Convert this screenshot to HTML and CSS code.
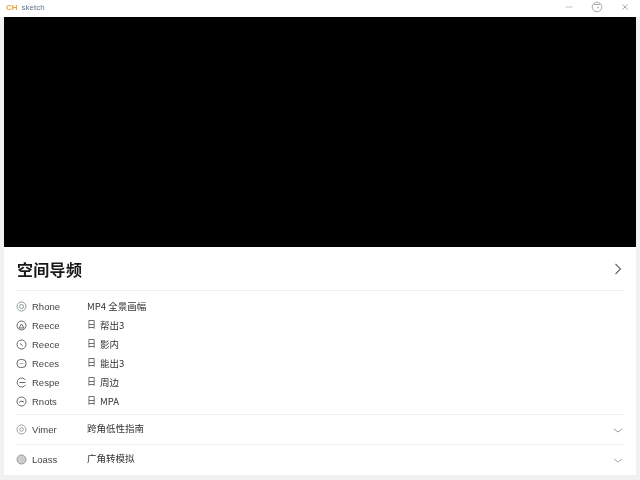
FILE: index.html
```html
<!DOCTYPE html>
<html lang="zh">
<head>
<meta charset="utf-8">
<title>空间导频</title>
<link rel="stylesheet" href="styles.css">
</head>
<body>
<div class="window">
  <header class="titlebar">
    <div class="brand">
      <span class="logo">CH</span>
      <span class="appname">sketch</span>
    </div>
    <div class="controls">
      <svg class="ctl" width="12" height="12" viewBox="0 0 12 12"><path d="M2.500 6h7" stroke="#c4c4c4" fill="none"/></svg>
      <svg class="ctl" width="12" height="12" viewBox="0 0 12 12"><circle cx="6" cy="6" r="4.800" stroke="#a8a8a8" fill="none"/><path d="M3 3.500h6M6 6l2 1" stroke="#a8a8a8" fill="none"/></svg>
      <svg class="ctl" width="12" height="12" viewBox="0 0 12 12"><path d="M3.500 3.500l5 5M8.500 3.500l-5 5" stroke="#b0a8a4" fill="none"/></svg>
    </div>
  </header>
  <div class="video"></div>
  <main class="panel">
    <section class="heading">
      <h1>空间导频</h1>
      <svg width="10" height="14" viewBox="0 0 10 14"><path d="M2.500 2l5 5-5 5" stroke="#666" stroke-width="1.100" fill="none"/></svg>
    </section>
    <section class="specs">
      <div class="row">
        <svg class="ico" width="11" height="11" viewBox="0 0 11 11"><circle cx="5.500" cy="5.500" r="4.500" stroke="#8a9a94" fill="none"/><circle cx="5.500" cy="5.500" r="2" stroke="#8a9a94" fill="none"/></svg>
        <span class="label">Rhone</span><span class="value">MP4 全景画幅</span>
      </div>
      <div class="row">
        <svg class="ico" width="11" height="11" viewBox="0 0 11 11"><circle cx="5.500" cy="5.500" r="4.500" stroke="#666" fill="none"/><path d="M3 8l2.500-4L8 8z" stroke="#666" fill="none"/></svg>
        <span class="label">Reece</span><span class="value"><span class="box">日</span>帮出3</span>
      </div>
      <div class="row">
        <svg class="ico" width="11" height="11" viewBox="0 0 11 11"><circle cx="5.500" cy="5.500" r="4.500" stroke="#666" fill="none"/><path d="M4 4.500l2.500 2" stroke="#666" fill="none"/></svg>
        <span class="label">Reece</span><span class="value"><span class="box">日</span>影内</span>
      </div>
      <div class="row">
        <svg class="ico" width="11" height="11" viewBox="0 0 11 11"><rect x="1" y="1.500" width="9" height="8" rx="3.500" stroke="#666" fill="none"/><path d="M3.500 5.500h4" stroke="#aaa" fill="none"/></svg>
        <span class="label">Reces</span><span class="value"><span class="box">日</span>能出3</span>
      </div>
      <div class="row">
        <svg class="ico" width="11" height="11" viewBox="0 0 11 11"><path d="M9.500 3.200A4.500 4.500 0 1 0 9.500 7.800" stroke="#666" fill="none"/><path d="M3.500 5.500h6" stroke="#666" fill="none"/></svg>
        <span class="label">Respe</span><span class="value"><span class="box">日</span>周边</span>
      </div>
      <div class="row">
        <svg class="ico" width="11" height="11" viewBox="0 0 11 11"><circle cx="5.500" cy="5.500" r="4.500" stroke="#666" fill="none"/><path d="M3 6.500l2-1.500 3 1" stroke="#666" fill="none"/></svg>
        <span class="label">Rnots</span><span class="value"><span class="box">日</span>MPA</span>
      </div>
    </section>
    <section class="fold">
      <svg class="ico" width="11" height="11" viewBox="0 0 11 11"><circle cx="5.500" cy="5.500" r="4.500" stroke="#999" fill="none"/><circle cx="5.500" cy="5.500" r="1.800" stroke="#999" fill="none"/></svg>
      <span class="label">Vimer</span><span class="value">跨角低性指南</span>
      <svg class="chev" width="10" height="8" viewBox="0 0 10 8"><path d="M1 2l4 3 4-3" stroke="#999" fill="none"/></svg>
    </section>
    <section class="fold">
      <svg class="ico" width="11" height="11" viewBox="0 0 11 11"><circle cx="5.500" cy="5.500" r="4.500" stroke="#999" fill="#ccc"/></svg>
      <span class="label">Loass</span><span class="value">广角转模拟</span>
      <svg class="chev" width="10" height="8" viewBox="0 0 10 8"><path d="M1 2l4 3 4-3" stroke="#aaa" fill="none"/></svg>
    </section>
  </main>
</div>
</body>
</html>
```
FILE: styles.css
```css
* { box-sizing: border-box; }
html, body { margin: 0; height: 100%; }
body { background: #f1f1f1; font-family: "Liberation Sans", "Noto Sans CJK SC", sans-serif; color: #333; }
.window { width: 640px; height: 480px; display: flex; flex-direction: column; padding: 0 4px 5px; overflow: hidden; }
.titlebar { height: 17px; margin: 0 -4px; padding: 0 0 0 6px; background: #fff; display: flex; align-items: center; justify-content: space-between; flex: none; }
.brand { display: flex; gap: 4px; align-items: center; font-size: 8px; margin-top: -3px; filter: blur(0.4px); }
.logo { color: #e8a93a; font-weight: 700; }
.appname { color: #64748b; }
.controls { display: flex; gap: 16px; padding-right: 9px; margin-top: -4px; align-items: center; filter: blur(0.4px); }
.video { height: 230px; background: #000; flex: none; }
.panel { flex: 1; background: #fff; padding: 0 12px; display: flex; flex-direction: column; }
.heading { height: 44px; display: flex; align-items: center; justify-content: space-between; border-bottom: 1px solid #efefef; padding: 0 1px 0 1px; flex: none; }
h1 { margin: 0; font-size: 16px; font-weight: 700; color: #1a1a1a; font-family: "Noto Sans CJK SC", sans-serif; line-height: 1; letter-spacing: 0.3px; filter: blur(0.3px); }
.specs { padding: 6px 0 3px; border-bottom: 1px solid #f1f1f1; flex: none; }
.row { height: 19px; display: flex; align-items: center; }
.ico { flex: none; margin-right: 5px; filter: blur(0.3px); }
.label { width: 55px; flex: none; color: #444; font-size: 9.500px; filter: blur(0.35px); }
.value { color: #333; font-size: 9.500px; display: flex; align-items: center; font-family: "Noto Sans CJK SC", sans-serif; padding-bottom: 2px; filter: blur(0.35px); }
.box { width: 13px; color: #444; font-size: 9px; }
.fold { height: 30px; display: flex; align-items: center; border-bottom: 1px solid #f3f3f3; padding-bottom: 1px; flex: none; }
.fold:last-child { border-bottom: 0; padding-bottom: 2px; }
.chev { margin-left: auto; margin-right: 1px; margin-top: 4px; }
```
